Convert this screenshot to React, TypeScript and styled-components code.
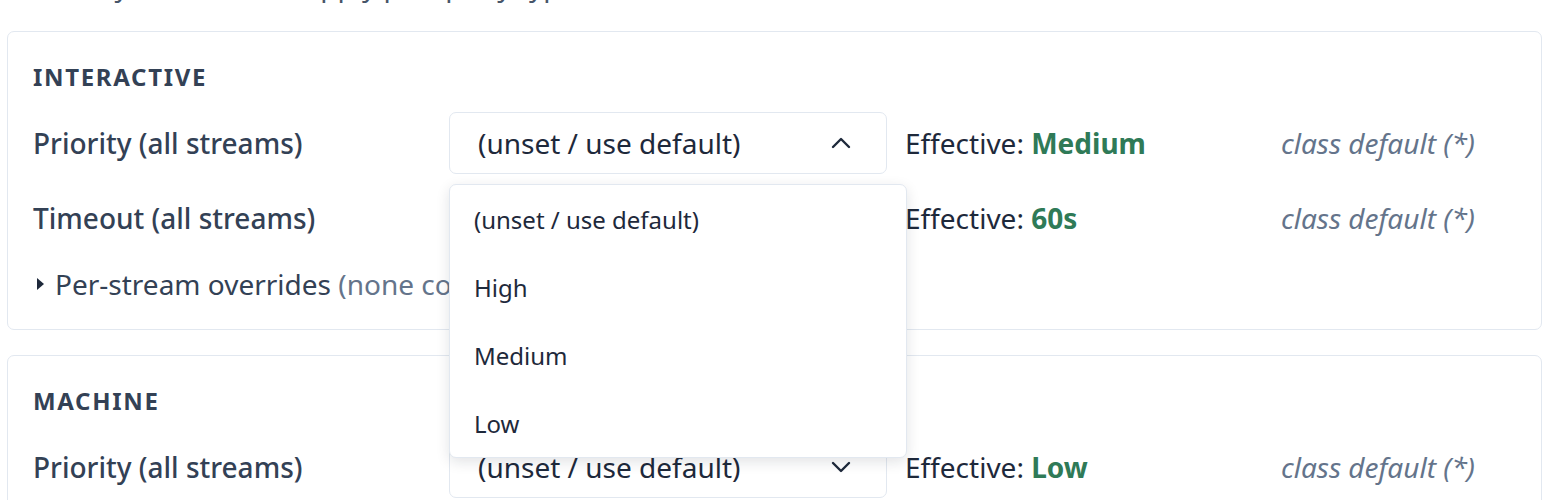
import * as React from 'react'
import styled, { createGlobalStyle } from 'styled-components'

const GlobalStyle = createGlobalStyle`
  html, body {
    margin: 0;
    padding: 0;
    background: #ffffff;
    font-family: 'Noto Sans', 'Open Sans', sans-serif;
    color: #334155;
    overflow: hidden;
  }
  * {
    box-sizing: border-box;
  }
`

const StyledPage = styled.div`
  padding: 0 26px 0 7px;
`

const StyledIntro = styled.p`
  margin: -33px 0 28px 26px;
  font-size: 28px;
  line-height: 36px;
  color: #475569;
`

const StyledCard = styled.section`
  border: 1px solid #e2e8f0;
  border-radius: 7px;
  padding: 31px 25px 26px;
  background: #ffffff;
  display: flex;
  flex-direction: column;

  & + & {
    margin-top: 25px;
  }
`

const StyledHeading = styled.h3`
  margin: 0 0 21px;
  font-size: 24px;
  line-height: 28px;
  font-weight: 700;
  letter-spacing: 0.07em;
  text-transform: uppercase;
  color: #334155;
`

const StyledRows = styled.div`
  display: flex;
  flex-direction: column;
  gap: 13px;
`

const StyledRow = styled.div`
  display: grid;
  grid-template-columns: 398px 438px 358px auto;
  column-gap: 18px;
  align-items: center;
`

const StyledLabel = styled.span`
  font-size: 28px;
  font-weight: 500;
  color: #334155;
`

const StyledSelectWrap = styled.div`
  position: relative;
`

const StyledSelectButton = styled.button`
  width: 100%;
  height: 62px;
  display: flex;
  align-items: center;
  justify-content: space-between;
  padding: 0 35px 0 28px;
  border: 1px solid #e2e8f0;
  border-radius: 7px;
  background: #ffffff;
  font-family: inherit;
  font-size: 28px;
  color: #1e293b;
  cursor: pointer;
`

const StyledMenu = styled.ul`
  position: absolute;
  top: 72px;
  left: 0;
  width: 458px;
  margin: 0;
  padding: 0;
  list-style: none;
  background: #ffffff;
  border: 1px solid #e2e8f0;
  border-radius: 7px;
  box-shadow: 0 4px 14px rgba(15, 23, 42, 0.12);
  z-index: 10;
`

const StyledMenuItem = styled.li`
  height: 68px;
  display: flex;
  align-items: center;
  padding: 0 24px;
  font-size: 24px;
  color: #1e293b;
`

const StyledEffective = styled.span`
  font-size: 28px;
  color: #1e293b;
  white-space: nowrap;
`

const StyledValue = styled.b`
  font-weight: 700;
  color: #2f7a57;
`

const StyledSource = styled.span`
  font-size: 28px;
  font-style: italic;
  color: #64748b;
  white-space: nowrap;
`

const StyledSummary = styled.div`
  margin-top: 16px;
  display: flex;
  align-items: center;
  gap: 10px;
  padding-left: 4px;
  font-size: 28px;
  line-height: 38px;
  color: #334155;
  white-space: nowrap;
`

const StyledMuted = styled.span`
  color: #64748b;
`

const Chevron = ({ up }: { up?: boolean }) => (
  <svg width="20" height="12" viewBox="0 0 20 12" fill="none">
    <polyline
      points={up ? '2,10 10,2 18,10' : '2,2 10,10 18,2'}
      stroke="#1e293b"
      strokeWidth="2.4"
      strokeLinecap="round"
      strokeLinejoin="round"
    />
  </svg>
)

const Caret = () => (
  <svg width="8" height="14" viewBox="0 0 8 14">
    <polygon points="0,1 7,7 0,13" fill="#1e293b" />
  </svg>
)

const options = ['(unset / use default)', 'High', 'Medium', 'Low']

const Select = ({ open }: { open?: boolean }) => (
  <StyledSelectWrap>
    <StyledSelectButton type="button">
      <span>(unset / use default)</span>
      <Chevron up={open} />
    </StyledSelectButton>
    {open && (
      <StyledMenu>
        {options.map((o) => (
          <StyledMenuItem key={o}>{o}</StyledMenuItem>
        ))}
      </StyledMenu>
    )}
  </StyledSelectWrap>
)

type SettingRowProps = {
  label: string
  value: string
  open?: boolean
}

const SettingRow = ({ label, value, open }: SettingRowProps) => (
  <StyledRow>
    <StyledLabel>{label}</StyledLabel>
    <Select open={open} />
    <StyledEffective>
      Effective: <StyledValue>{value}</StyledValue>
    </StyledEffective>
    <StyledSource>class default (*)</StyledSource>
  </StyledRow>
)

const App = () => {
  return (
    <StyledPage>
      <GlobalStyle />
      <StyledIntro>Priority and timeout apply per query type</StyledIntro>

      <StyledCard>
        <StyledHeading>Interactive</StyledHeading>
        <StyledRows>
          <SettingRow label="Priority (all streams)" value="Medium" open />
          <SettingRow label="Timeout (all streams)" value="60s" />
        </StyledRows>
        <StyledSummary>
          <Caret />
          <span>
            Per-stream overrides <StyledMuted>(none configured)</StyledMuted>
          </span>
        </StyledSummary>
      </StyledCard>

      <StyledCard>
        <StyledHeading>Machine</StyledHeading>
        <StyledRows>
          <SettingRow label="Priority (all streams)" value="Low" />
          <SettingRow label="Timeout (all streams)" value="300s" />
        </StyledRows>
        <StyledSummary>
          <Caret />
          <span>
            Per-stream overrides <StyledMuted>(none configured)</StyledMuted>
          </span>
        </StyledSummary>
      </StyledCard>
    </StyledPage>
  )
}

export default App
